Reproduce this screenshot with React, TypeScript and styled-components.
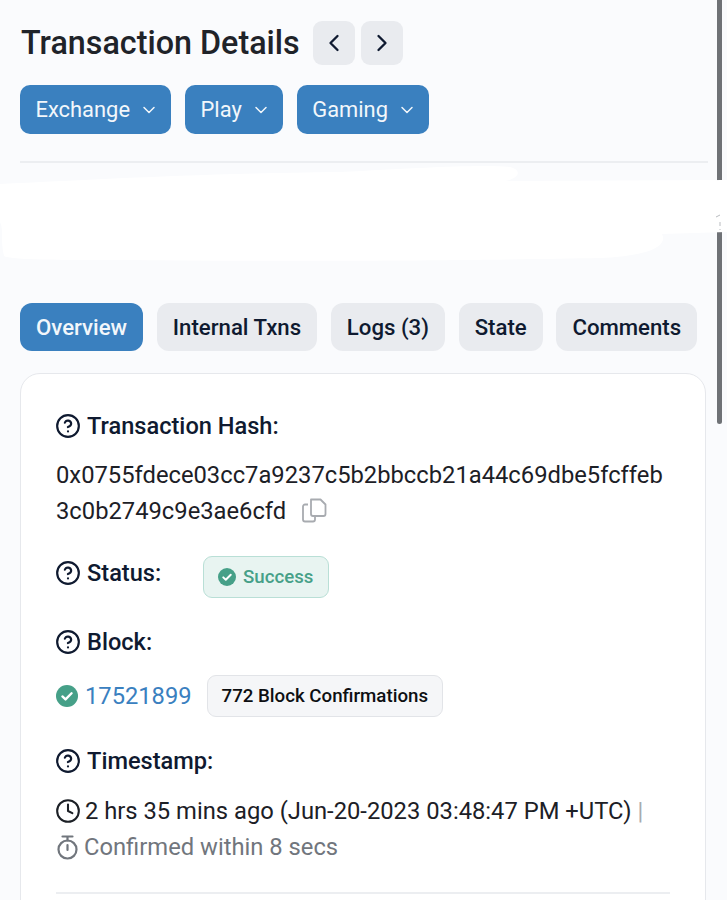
import React from 'react';
import styled, { createGlobalStyle } from 'styled-components';
import { ChevronDown, ChevronLeft, ChevronRight, CircleHelp, Clock } from 'lucide-react';

const GlobalStyle = createGlobalStyle`
  html, body {
    margin: 0;
    padding: 0;
    overflow: hidden;
    background: #fafbfd;
  }
  body {
    font-family: Roboto, "Liberation Sans", sans-serif;
    color: #0f1a30;
  }
`;

const Page = styled.div`
  position: relative;
  width: 727px;
  height: 900px;
  overflow: hidden;
  padding: 21px 21px 0 20px;
  box-sizing: border-box;
`;

const TitleRow = styled.div`
  display: flex;
  align-items: center;
  gap: 6px;
  height: 44px;
`;

const Title = styled.h1`
  margin: 0 7px 0 1px;
  font-size: 32.3px;
  font-weight: 500;
  color: #1f2329;
  white-space: nowrap;
`;

const NavButton = styled.button`
  display: flex;
  align-items: center;
  justify-content: center;
  width: 42px;
  height: 44px;
  padding: 0;
  border: 0;
  border-radius: 9px;
  background: #e9ebef;
  color: #0f1a30;
`;

const MenuRow = styled.div`
  display: flex;
  gap: 14px;
  margin-top: 20px;
`;

const MenuButton = styled.button`
  display: flex;
  align-items: center;
  gap: 9px;
  height: 49px;
  padding: 0 12px 0 15.5px;
  border: 0;
  border-radius: 10px;
  background: #3a80bf;
  color: #f2f7fb;
  font-family: inherit;
  font-size: 21.9px;
`;

const Divider = styled.hr`
  width: 688px;
  height: 2px;
  margin: 27px 0 0;
  border: 0;
  background: #eceef1;
`;

const Redaction = styled.svg`
  position: absolute;
  left: 0;
  top: 160px;
`;

const Scrollbar = styled.div`
  position: absolute;
  top: 0;
  left: 717px;
  width: 5px;
  height: 424px;
  border-radius: 0 0 3px 3px;
  background: #6f7276;
`;

const Tabs = styled.div`
  display: flex;
  gap: 13.7px;
  margin-top: 140px;
`;

const Tab = styled.div<{ $active?: boolean }>`
  display: flex;
  align-items: center;
  height: 48px;
  padding: 0 16px;
  border-radius: 12px;
  background: ${(p) => (p.$active ? '#3a80bf' : '#e9ebef')};
  color: ${(p) => (p.$active ? '#f2f7fb' : '#0f1a30')};
  font-size: 22.2px;
  font-weight: 500;
  white-space: nowrap;
`;

const Card = styled.div`
  width: 686px;
  height: 600px;
  margin-top: 22px;
  padding: 37px 35px 0;
  box-sizing: border-box;
  border: 1px solid #e6e8ec;
  border-radius: 20px;
  background: #ffffff;
`;

const Label = styled.div`
  display: flex;
  align-items: center;
  gap: 6px;
  height: 30px;
  font-size: 23.6px;
  font-weight: 500;
  color: #0f1a30;
`;

const HelpIcon = styled(CircleHelp)`
  margin-left: -1px;
  color: #0f1a30;
`;

const HashText = styled.div`
  margin-top: 16px;
  font-size: 23.75px;
  line-height: 36px;
  color: #1c2026;
  word-break: break-all;
`;

const CopyIcon = styled.svg`
  margin-left: 16px;
  vertical-align: -4px;
`;

const StatusRow = styled.div`
  display: flex;
  align-items: flex-start;
  margin-top: 27px;
`;

const StatusLabel = styled(Label)`
  width: 147px;
  margin-top: 2px;
`;

const SuccessBadge = styled.div`
  display: flex;
  align-items: center;
  gap: 7px;
  height: 40px;
  padding: 0 15px 0 14px;
  border: 1px solid #b9dfd6;
  border-radius: 9px;
  background: #e8f4f1;
  color: #46a088;
  font-size: 18.7px;
  font-weight: 500;
`;

const BlockLabel = styled(Label)`
  margin-top: 29px;
`;

const BlockRow = styled.div`
  display: flex;
  align-items: center;
  gap: 15px;
  margin-top: 18px;
`;

const BlockLink = styled.a`
  display: flex;
  align-items: center;
  gap: 7px;
  font-size: 23.7px;
  color: #3a80bf;
`;

const ConfirmBadge = styled.div`
  display: flex;
  align-items: center;
  height: 40px;
  padding: 0 14px;
  border: 1px solid #e2e4e8;
  border-radius: 9px;
  background: #f5f6f8;
  color: #0d0f12;
  font-size: 18.7px;
  font-weight: 500;
`;

const TimeLabel = styled(Label)`
  margin-top: 29px;
`;

const TimeRow = styled.div`
  display: flex;
  align-items: center;
  gap: 4px;
  height: 36px;
  font-size: 23.75px;
  color: #1c2026;
  white-space: nowrap;
`;

const FirstTimeRow = styled(TimeRow)`
  margin-top: 17px;
`;

const MutedRow = styled(TimeRow)`
  gap: 5px;
  color: #71767d;
`;

const ClockIcon = styled(Clock)`
  margin-left: -1px;
`;

const Pipe = styled.span`
  margin-left: 2px;
  color: #a8abb0;
`;

const BottomRule = styled.hr`
  height: 2px;
  margin: 27px 0 0;
  border: 0;
  background: #eceef1;
`;

const CheckCircle = ({ size }: { size: number }) => (
  <svg width={size} height={size} viewBox="0 0 24 24">
    <circle cx="12" cy="12" r="12" fill="#46a088" />
    <path d="M7 12.5l3.4 3.2L17 9" fill="none" stroke="#fff" strokeWidth="2.6" strokeLinecap="round" strokeLinejoin="round" />
  </svg>
);

const Stopwatch = () => (
  <svg width="23" height="25" viewBox="0 0 23 25" fill="none" stroke="#71767d" strokeWidth="2.2" strokeLinecap="round">
    <circle cx="11.5" cy="14.5" r="9" />
    <path d="M6.5 1.5h10M11.5 1.5v4M11.5 10v5" />
  </svg>
);

const Help = () => <HelpIcon size={26} strokeWidth={2} />;

const App: React.FC = () => {
  const menus = ['Exchange', 'Play', 'Gaming'];
  const tabs = ['Overview', 'Internal Txns', 'Logs (3)', 'State', 'Comments'];

  return (
    <Page>
      <GlobalStyle />
      <TitleRow>
        <Title>Transaction Details</Title>
        <NavButton>
          <ChevronLeft size={28} strokeWidth={2} />
        </NavButton>
        <NavButton>
          <ChevronRight size={28} strokeWidth={2} />
        </NavButton>
      </TitleRow>
      <MenuRow>
        {menus.map((m) => (
          <MenuButton key={m}>
            {m}
            <ChevronDown size={20} strokeWidth={1.8} />
          </MenuButton>
        ))}
      </MenuRow>
      <Divider />
      <Scrollbar />
      <Redaction width="727" height="110" viewBox="0 0 727 110">
        <path
          d="M0 24 C90 20 180 14 340 12 C420 8 480 4 510 7 C522 10 520 18 505 21 L727 20 L727 72 L662 74 C668 86 650 96 600 98 C500 100 300 102 120 100 C60 100 10 100 4 96 C0 80 4 70 0 62 Z"
          fill="#ffffff"
        />
        <path d="M716 57l4-2M720 62v4M720 69v1" fill="none" stroke="#b9bcc0" strokeWidth="1" />
      </Redaction>
      <Tabs>
        {tabs.map((t, i) => (
          <Tab key={t} $active={i === 0}>
            {t}
          </Tab>
        ))}
      </Tabs>
      <Card>
        <Label>
          <Help />
          Transaction Hash:
        </Label>
        <HashText>
          0x0755fdece03cc7a9237c5b2bbccb21a44c69dbe5fcffeb
          <br />
          3c0b2749c9e3ae6cfd
          <CopyIcon width="25" height="25" viewBox="0 0 25 25" fill="none" stroke="#a8abb0" strokeWidth="1.8" strokeLinejoin="round">
            <path d="M9 1.5h9.5l5 5V16a2 2 0 0 1-2 2H11a2 2 0 0 1-2-2z" />
            <path d="M6 6.5H3a2 2 0 0 0-2 2V21.5a2 2 0 0 0 2 2h8a2 2 0 0 0 2-2V18" />
          </CopyIcon>
        </HashText>
        <StatusRow>
          <StatusLabel>
            <Help />
            Status:
          </StatusLabel>
          <SuccessBadge>
            <CheckCircle size={18} />
            Success
          </SuccessBadge>
        </StatusRow>
        <BlockLabel>
          <Help />
          Block:
        </BlockLabel>
        <BlockRow>
          <BlockLink>
            <CheckCircle size={22} />
            17521899
          </BlockLink>
          <ConfirmBadge>772 Block Confirmations</ConfirmBadge>
        </BlockRow>
        <TimeLabel>
          <Help />
          Timestamp:
        </TimeLabel>
        <FirstTimeRow>
          <ClockIcon size={26} strokeWidth={1.9} />
          2 hrs 35 mins ago (Jun-20-2023 03:48:47 PM +UTC)
          <Pipe>|</Pipe>
        </FirstTimeRow>
        <MutedRow>
          <Stopwatch />
          Confirmed within 8 secs
        </MutedRow>
        <BottomRule />
      </Card>
    </Page>
  );
};

export default App;
